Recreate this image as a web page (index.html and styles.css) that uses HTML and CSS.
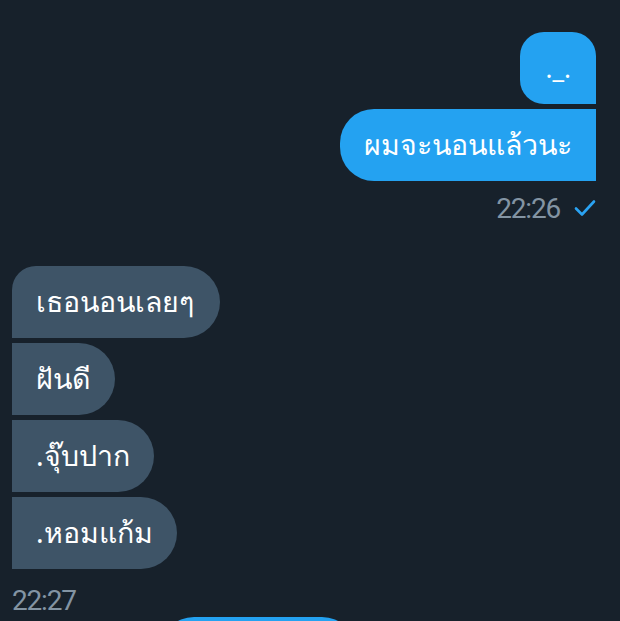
FILE: index.html
```html
<!DOCTYPE html>
<html lang="th">
<head>
  <meta charset="UTF-8">
  <meta name="viewport" content="width=device-width, initial-scale=1.0">
  <title>Chat</title>
  <link rel="stylesheet" href="styles.css">
</head>
<body>

<div class="chat">
  <div class="group out">
    <div class="bubble first">._.</div>
    <div class="bubble last">ผมจะนอนแล้วนะ</div>
    <div class="meta">
      <span class="time">22:26</span>
      <svg class="check" width="22" height="18" viewBox="0 0 22 18">
        <path d="M2 9.5 L8 15.5 L20 2.5" fill="none" stroke="#2aa3f3" stroke-width="2.6" stroke-linecap="round" stroke-linejoin="round"/>
      </svg>
    </div>
  </div>

  <div class="group in">
    <div class="bubble first">เธอนอนเลยๆ</div>
    <div class="bubble">ฝันดี</div>
    <div class="bubble">.จุ๊บปาก</div>
    <div class="bubble">.หอมแก้ม</div>
    <div class="meta">
      <span class="time">22:27</span>
    </div>
  </div>

  <div class="group out">
    <div class="bubble next"></div>
  </div>
</div>

</body>
</html>
```

FILE: styles.css
```css
body {
    margin: 0;
    padding: 0;
    background-color: #17212b;
    font-family: "Noto Sans", Roboto, sans-serif;
    height: 621px;
    overflow: hidden;
}

.chat {
    padding-top: 32px;
    display: flex;
    flex-direction: column;
    height: 621px;
    box-sizing: border-box;
    overflow: hidden;
}

.group {
    display: flex;
    flex-direction: column;
    gap: 5px;
    flex-shrink: 0;
}

.group.out {
    align-items: flex-end;
    padding-right: 24px;
}

.group.in {
    align-items: flex-start;
    padding-left: 12px;
    margin-top: 43px;
}

.bubble {
    height: 72px;
    padding: 0 24px;
    display: flex;
    align-items: center;
    color: #fff;
    font-size: 28.5px;
    box-sizing: border-box;
    flex-shrink: 0;
}

.out .bubble {
    background-color: #24a2f1;
    border-radius: 34px 0 0 34px;
}

.out .bubble.first {
    border-radius: 24px 24px 0 24px;
    padding: 0 25px 0 26px;
    font-size: 26px;
}

.in .bubble {
    background-color: #3e5467;
    border-radius: 0 36px 36px 0;
}

.in .bubble.first {
    border-radius: 24px 36px 36px 0;
    padding-right: 26px;
}

.meta {
    display: flex;
    align-items: center;
    gap: 14px;
    margin-top: 7px;
    height: 30px;
}

.time {
    font-family: Roboto, "Liberation Sans", sans-serif;
    font-size: 28px;
    letter-spacing: -1.2px;
    color: #8394a3;
}

.in .meta {
    margin-top: 11px;
}

.group.out:last-child {
    margin-top: 2px;
}

.bubble.next {
    width: 196px;
    margin-right: 240px;
    border-radius: 34px;
}
```
